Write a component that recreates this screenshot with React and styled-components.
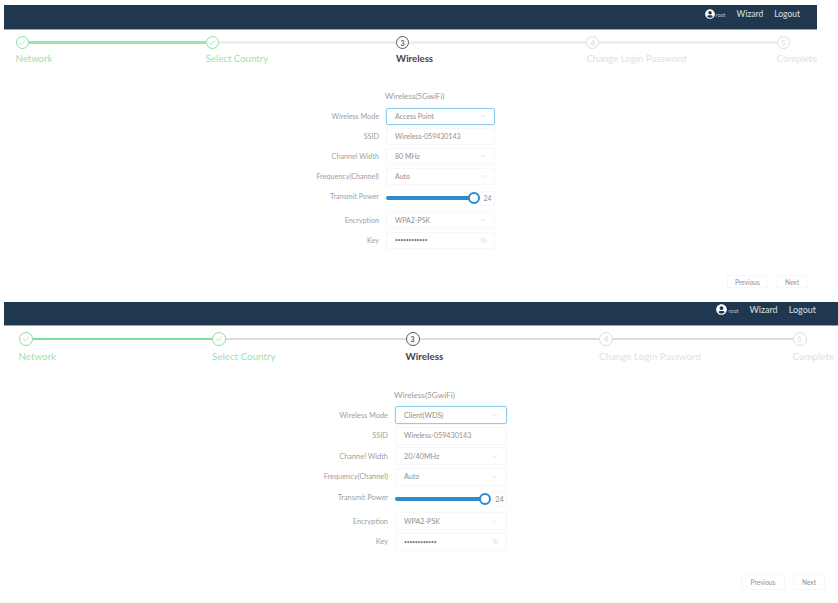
import React from 'react';
import styled, { createGlobalStyle, ThemeProvider } from 'styled-components';
import { Check, ChevronDown, EyeOff } from 'lucide-react';
import { FaUserCircle } from 'react-icons/fa';

const small = {
  width: 813, height: 297, headerH: 25, headerLift: 7, headerPad: 17, userGap: 11, navSize: 8.5, rootSize: 5.5, iconSize: 10,
  stepsPad: 6, stepsLeft: 11.5, pitch: 190.3, circle: 13, labelGap: 4, stepSize: 9.6, line: 2.5,
  green: '#9be2ac', grey: '#eeeef0', formTop: 24, formLeft: 295, control: 109, rowH: 20, fieldH: 17,
  sliderRowH: 24, titleSize: 8, labelSize: 7.2, valueSize: 7, track: 89, prevW: 41, nextW: 32, btnH: 13, footPad: 14, footRight: 9,
};
const large = {
  width: 834, height: 301, headerH: 24, headerLift: 8, headerPad: 22, userGap: 11, navSize: 9, rootSize: 5.5, iconSize: 11,
  stepsPad: 5.5, stepsLeft: 14.5, pitch: 193.5, circle: 14, labelGap: 4.5, stepSize: 9.8, line: 2,
  green: '#7fde92', grey: '#dcdcde', formTop: 26, formLeft: 304, control: 112, rowH: 20.5, fieldH: 18,
  sliderRowH: 24, titleSize: 8.2, labelSize: 7.4, valueSize: 7.2, track: 90, prevW: 44, nextW: 32, btnH: 16, footPad: 13, footRight: 13,
};

const steps = ['Network', 'Select Country', 'Wireless', 'Change Login Password', 'Complete'];

export default function App() {
  return (
    <>
      <GlobalStyle />
      <Page>
        <ThemeProvider theme={small}>
          <Wizard mode="Access Point" width="80 MHz" />
        </ThemeProvider>
        <ThemeProvider theme={large}>
          <Wizard mode="Client(WDS)" width="20/40MHz" />
        </ThemeProvider>
      </Page>
    </>
  );
}

const Wizard = ({ mode, width }) => (
  <Panel>
    <Header>
      <User>
        <FaUserCircle />
        <span>root</span>
      </User>
      <NavLink>Wizard</NavLink>
      <NavLink>Logout</NavLink>
    </Header>

    <Steps>
      {steps.map((name, i) => (
        <Step key={name}>
          <StepTrack>
            <Circle $state={i < 2 ? 'done' : i === 2 ? 'current' : 'todo'}>
              {i < 2 ? <Check size={8} strokeWidth={2} /> : i + 1}
            </Circle>
            {i < 4 && <Connector $done={i < 1} />}
          </StepTrack>
          <StepLabel $state={i < 2 ? 'done' : i === 2 ? 'current' : 'todo'}>{name}</StepLabel>
        </Step>
      ))}
    </Steps>

    <Form>
      <FormTitle>Wireless(5GwiFi)</FormTitle>
      <FieldRow label="Wireless Mode"><Field $focus>{mode}<ChevronDown size={8} /></Field></FieldRow>
      <FieldRow label="SSID"><Field>Wireless-059430143</Field></FieldRow>
      <FieldRow label="Channel Width"><Field>{width}<ChevronDown size={8} /></Field></FieldRow>
      <FieldRow label="Frequency(Channel)"><Field>Auto<ChevronDown size={8} /></Field></FieldRow>
      <SliderLabel>Transmit Power</SliderLabel>
      <SliderRow>
        <SliderFill />
        <SliderThumb />
        <SliderValue>24</SliderValue>
      </SliderRow>
      <FieldRow label="Encryption"><Field>WPA2-PSK<ChevronDown size={8} /></Field></FieldRow>
      <FieldRow label="Key"><Field><Dots>••••••••••••</Dots><EyeOff size={7} /></Field></FieldRow>
    </Form>

    <Footer>
      <FooterButton $w="prevW">Previous</FooterButton>
      <FooterButton $w="nextW">Next</FooterButton>
    </Footer>
  </Panel>
);

const FieldRow = ({ label, children }) => (
  <>
    <FieldLabel>{label}</FieldLabel>
    <FieldCell>{children}</FieldCell>
  </>
);

const GlobalStyle = createGlobalStyle`
  html, body { margin: 0; padding: 0; background: #fff; overflow: hidden; }
  body { font-family: Lato, "Liberation Sans", sans-serif; }
`;

// each panel is a soft, low resolution capture
const Page = styled.div`
  padding: 5px 0 0 4px;
`;

const Panel = styled.section`
  width: ${p => p.theme.width}px;
  height: ${p => p.theme.height}px;
  display: flex;
  flex-direction: column;
  overflow: hidden;
`;

const Header = styled.header`
  height: ${p => p.theme.headerH}px;
  flex-shrink: 0;
  box-sizing: border-box;
  background: #1f3850;
  border-bottom: 1px solid #8ba3b3;
  padding: 0 ${p => p.theme.headerPad}px ${p => p.theme.headerLift}px 0;
  display: flex;
  align-items: center;
  justify-content: flex-end;
  gap: ${p => p.theme.userGap}px;
  color: #fff;
`;

const User = styled.div`
  display: flex;
  align-items: center;
  gap: 1px;
  font-size: ${p => p.theme.rootSize}px;
  color: #b9c5ce;

  svg {
    width: ${p => p.theme.iconSize}px;
    height: ${p => p.theme.iconSize}px;
    color: #fff;
  }
  span { margin-top: 2px; }
`;

const NavLink = styled.span`
  font-size: ${p => p.theme.navSize}px;
  color: #d8e0e6;
`;

const Steps = styled.div`
  display: flex;
  padding: ${p => p.theme.stepsPad}px 0 0 ${p => p.theme.stepsLeft}px;
`;

const Step = styled.div`
  flex: 0 0 ${p => p.theme.pitch}px;
  min-width: 0;
`;

const StepTrack = styled.div`
  display: flex;
  align-items: center;
`;

const circleColors = { done: '#8cdda0', current: '#5a5a5a', todo: '#dedee2' };
const textColors = { done: '#9ae3ac', current: '#444', todo: '#e0e0e4' };

const Circle = styled.div`
  width: ${p => p.theme.circle}px;
  height: ${p => p.theme.circle}px;
  flex-shrink: 0;
  box-sizing: border-box;
  border-radius: 50%;
  border: 1.5px solid ${p => circleColors[p.$state]};
  color: ${p => circleColors[p.$state]};
  font-size: 7px;
  font-weight: 700;
  display: flex;
  align-items: center;
  justify-content: center;
`;

const Connector = styled.div`
  flex: 1;
  height: ${p => p.theme.line}px;
  background: ${p => (p.$done ? p.theme.green : p.theme.grey)};
`;

const StepLabel = styled.div`
  margin-top: ${p => p.theme.labelGap}px;
  font-size: ${p => p.theme.stepSize}px;
  line-height: 12px;
  white-space: nowrap;
  font-weight: ${p => (p.$state === 'current' ? 700 : 400)};
  color: ${p => textColors[p.$state]};
`;

const Form = styled.div`
  margin: ${p => p.theme.formTop}px 0 0 ${p => p.theme.formLeft}px;
  display: grid;
  grid-template-columns: 80px ${p => p.theme.control}px;
  column-gap: 7px;
  align-items: center;
`;

const FormTitle = styled.div`
  grid-column: 2;
  font-size: ${p => p.theme.titleSize}px;
  line-height: 14px;
  margin: 0 0 3px -1px;
  color: #999;
  white-space: nowrap;
`;

const FieldLabel = styled.div`
  justify-self: end;
  white-space: nowrap;
  font-size: ${p => p.theme.labelSize}px;
  color: #a0a0a0;
`;

const FieldCell = styled.div`
  height: ${p => p.theme.rowH}px;
  display: flex;
  align-items: center;
`;

const Field = styled.div`
  width: 100%;
  height: ${p => p.theme.fieldH}px;
  box-sizing: border-box;
  padding: 0 7px 0 8px;
  border-radius: 2px;
  border: 1px solid ${p => (p.$focus ? '#8fcdee' : '#f7f7f9')};
  box-shadow: ${p => (p.$focus ? '0 0 2px #cfeaf8' : 'none')};
  display: flex;
  align-items: center;
  justify-content: space-between;
  font-size: ${p => p.theme.valueSize}px;
  color: #909090;

  svg { color: #dcdce0; }
`;

const Dots = styled.span`
  font-size: 5px;
  letter-spacing: -0.2px;
  color: #777;
`;

const SliderLabel = styled(FieldLabel)`
  margin-top: -3px;
`;

const SliderRow = styled.div`
  height: ${p => p.theme.sliderRowH}px;
  display: flex;
  align-items: center;
`;

const SliderFill = styled.div`
  width: ${p => p.theme.track}px;
  height: 3.5px;
  border-radius: 2px;
  background: #2c8ccb;
`;

const SliderThumb = styled.div`
  width: 12px;
  height: 12px;
  flex-shrink: 0;
  margin-left: -6px;
  box-sizing: border-box;
  border-radius: 50%;
  background: #fff;
  border: 2px solid #2c8ccb;
`;

const SliderValue = styled.div`
  margin-left: auto;
  width: 15px;
  height: 15px;
  box-sizing: border-box;
  border: 1px solid #f7f7f9;
  display: flex;
  align-items: center;
  justify-content: center;
  font-size: ${p => p.theme.valueSize}px;
  color: #909090;
`;

const Footer = styled.div`
  margin-top: auto;
  padding: 0 ${p => p.theme.footRight}px ${p => p.theme.footPad}px 0;
  display: flex;
  justify-content: flex-end;
  gap: 8px;
`;

const FooterButton = styled.button`
  width: ${p => p.theme[p.$w]}px;
  height: ${p => p.theme.btnH}px;
  padding: 0;
  background: #fff;
  border: 1px solid #f7f7f8;
  border-radius: 2px;
  font-family: inherit;
  font-size: 6.6px;
  color: #909090;
`;
